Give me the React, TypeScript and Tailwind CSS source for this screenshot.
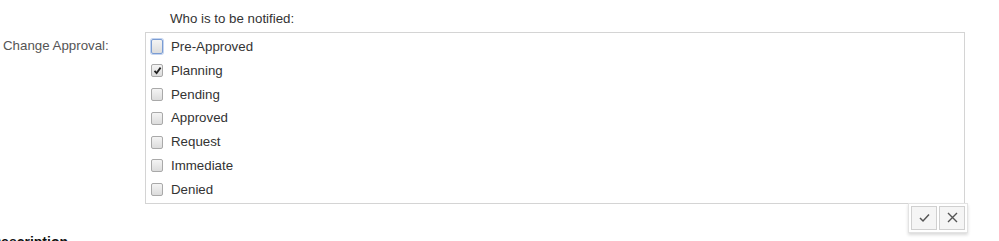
const options = [
  { label: 'Pre-Approved', checked: false, focus: true },
  { label: 'Planning', checked: true, focus: false },
  { label: 'Pending', checked: false, focus: false },
  { label: 'Approved', checked: false, focus: false },
  { label: 'Request', checked: false, focus: false },
  { label: 'Immediate', checked: false, focus: false },
  { label: 'Denied', checked: false, focus: false },
];

function Box({ checked, focus }: { checked: boolean; focus: boolean }) {
  return (
    <span
      className={
        'flex h-[13px] w-[12px] items-center justify-center rounded-[2px] border bg-gradient-to-b from-[#f4f4f4] to-[#dcdcdc] ' +
        (focus ? 'h-[15px] border-[#7a9cd3] ring-1 ring-[#c5d5f0]' : 'border-[#a9a9a9]')
      }
    >
      {checked && (
        <svg width="9" height="9" viewBox="0 0 9 9">
          <path d="M1.5 4.8 L3.6 7 L7.6 1.6" fill="none" stroke="#222" strokeWidth="1.8" />
        </svg>
      )}
    </span>
  );
}

export default function App() {
  return (
    <div className="h-[241px] w-[999px] overflow-hidden bg-white font-['Liberation_Sans',Arial,sans-serif] text-[13.3px] text-[#333]">
      <div className="pl-[170px] pt-[11px] leading-[16px]">Who is to be notified:</div>
      <div className="mt-[5px] flex">
        <div className="w-[145px] pl-[3px] pt-[4px] text-[#555]">Change Approval:</div>
        <div>
          <div className="w-[820px] border border-[#d4d4d4] pt-[2px] pb-[1px]">
            {options.map((o) => (
              <div key={o.label} className="flex h-[23.8px] items-center">
                <span className="ml-[5px] mr-[8px]">
                  <Box checked={o.checked} focus={o.focus} />
                </span>
                <span>{o.label}</span>
              </div>
            ))}
          </div>
          <div className="-mt-[1px] flex justify-end">
            <div className="mr-[-3px] flex gap-[2px] border border-[#e3e3e3] bg-white p-[2px] shadow-[0_2px_3px_rgba(0,0,0,0.15)]">
              <button className="flex h-[24px] w-[26px] items-center justify-center border border-[#d0d0d0] bg-[#f5f5f5]">
                <svg width="13" height="13" viewBox="0 0 13 13">
                  <path d="M2 7 L5 10 L11 3.5" fill="none" stroke="#555" strokeWidth="1.5" />
                </svg>
              </button>
              <button className="flex h-[24px] w-[26px] items-center justify-center border border-[#d0d0d0] bg-[#f5f5f5]">
                <svg width="13" height="13" viewBox="0 0 13 13">
                  <path d="M2 2 L11 11 M11 2 L2 11" fill="none" stroke="#555" strokeWidth="1.4" />
                </svg>
              </button>
            </div>
          </div>
        </div>
      </div>
      <div className="mt-[1px] ml-[-9px] text-[14px] font-bold leading-[16px] text-[#111]">Description</div>
    </div>
  );
}
